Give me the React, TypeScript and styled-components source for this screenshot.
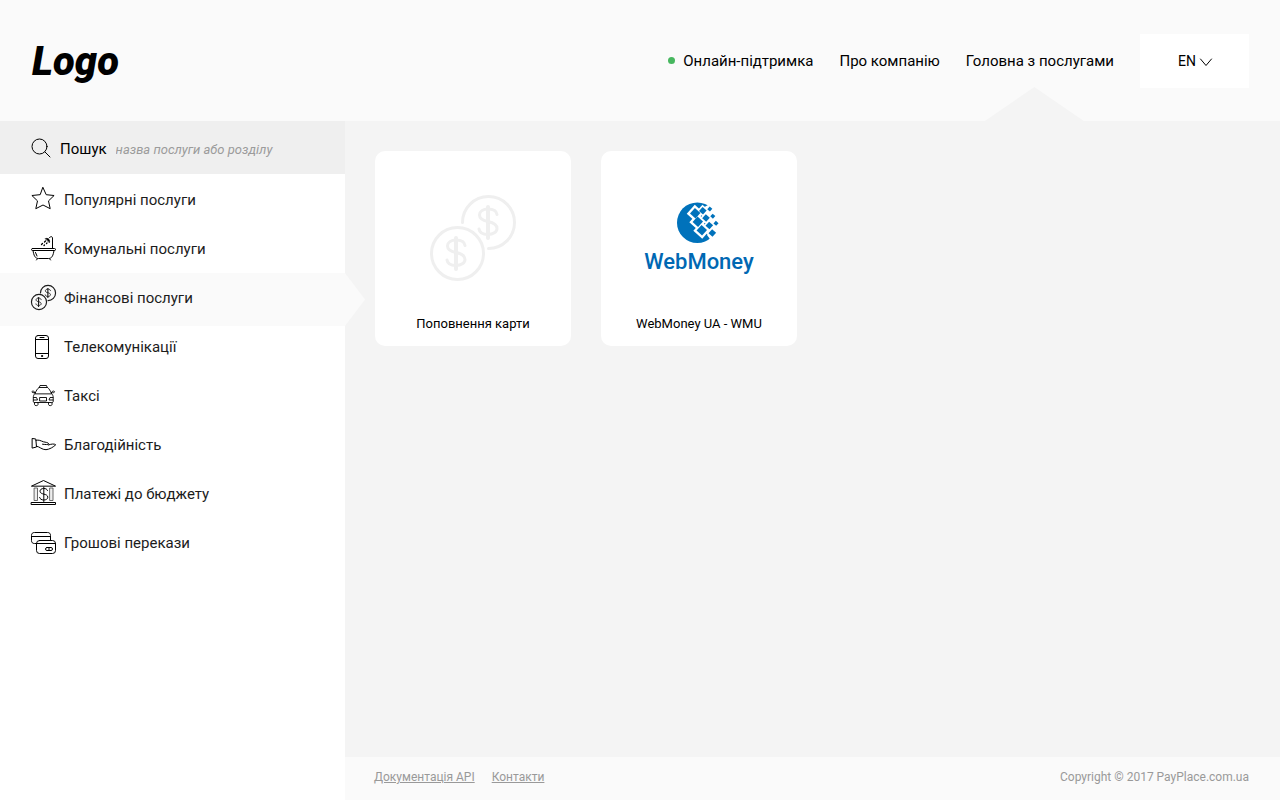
import React from "react";
import styled, { createGlobalStyle, css } from "styled-components";

const GlobalStyle = createGlobalStyle`
  *, *::before, *::after { box-sizing: border-box; }
  body {
    margin: 0;
    background: #f4f4f4;
    color: #000;
    font-family: Roboto, "Liberation Sans", sans-serif;
    font-size: 15px;
    line-height: 20px;
  }
  a { color: inherit; text-decoration: none; }
`;

const Page = styled.div`
  display: flex;
  flex-direction: column;
  min-height: 100vh;
`;

const Header = styled.header`
  display: flex;
  align-items: center;
  justify-content: space-between;
  height: 121px;
  padding: 0 31px 0 32px;
  background: #fafafa;
`;

const Logo = styled.a`
  padding-top: 2px;
  font-size: 40px;
  line-height: 48px;
  font-weight: 900;
  font-style: italic;
`;

const Nav = styled.nav`
  display: flex;
  align-items: center;
  align-self: stretch;
  gap: 26px;
`;

const NavLink = styled.a<{ $active?: boolean }>`
  position: relative;
  display: flex;
  align-items: center;
  align-self: stretch;
  gap: 8px;
  white-space: nowrap;

  ${({ $active }) =>
    $active &&
    css`
      &::after {
        content: "";
        position: absolute;
        left: 19px;
        bottom: 0;
        width: 99px;
        height: 34px;
        background: #f4f4f4;
        clip-path: polygon(50% 0, 100% 100%, 0 100%);
      }
    `}
`;

const OnlineDot = styled.span`
  width: 7px;
  height: 7px;
  border-radius: 50%;
  background: #47b75f;
`;

const Language = styled.label`
  position: relative;
  display: flex;
  width: 109px;
  height: 54px;
  background: #fff;

  svg {
    position: absolute;
    right: 37px;
    top: 24px;
    pointer-events: none;
  }
`;

const LanguageSelect = styled.select`
  appearance: none;
  flex: 1;
  padding: 0 38px;
  border: 0;
  background: transparent;
  color: #000;
  font: inherit;
  font-size: 14px;
  cursor: pointer;
`;

const Body = styled.div`
  display: flex;
  flex: 1;
`;

const Sidebar = styled.aside`
  flex: 0 0 345px;
  background: #fff;
`;

const Search = styled.label`
  display: flex;
  align-items: center;
  gap: 9px;
  height: 53px;
  padding: 0 31px;
  background: #efefef;
`;

const SearchTitle = styled.span`
  padding-top: 2px;
`;

const SearchInput = styled.input`
  flex: 1;
  min-width: 0;
  padding: 4px 0 0;
  border: 0;
  outline: 0;
  background: transparent;
  font: italic 13px/20px Roboto, "Liberation Sans", sans-serif;

  &::placeholder { color: #9b9b9b; opacity: 1; }
`;

const Menu = styled.ul`
  margin: 0;
  padding: 1px 0 0;
  list-style: none;
`;

const MenuLink = styled.a<{ $active?: boolean }>`
  position: relative;
  display: flex;
  align-items: center;
  gap: 8px;
  height: 49px;
  padding: 0 31px;
  color: #1c1c1c;

  ${({ $active }) =>
    $active &&
    css`
      height: 53px;
      margin-bottom: -4px;
      padding-bottom: 4px;
      background: #fafafa;

      &::after {
        content: "";
        position: absolute;
        left: 100%;
        top: 0;
        width: 20px;
        height: 100%;
        background: #fafafa;
        clip-path: polygon(0 0, 100% 50%, 0 100%);
      }
    `}
`;

const Glyph = styled.svg`
  flex: none;
  overflow: visible;
  fill: none;
  stroke: currentColor;
  stroke-linecap: round;
  stroke-linejoin: round;
`;

const Main = styled.main`
  display: flex;
  flex: 1;
  flex-direction: column;
  min-width: 0;
`;

const Cards = styled.div`
  display: flex;
  flex: 1;
  flex-wrap: wrap;
  align-content: flex-start;
  gap: 30px;
  padding: 30px;
`;

const Card = styled.a`
  display: flex;
  flex-direction: column;
  align-items: center;
  width: 196px;
  height: 195px;
  padding: 10px 10px 12px;
  border-radius: 10px;
  background: #fff;
  font-size: 13px;
  text-align: center;
`;

const CardPicture = styled.span`
  display: flex;
  flex: 1;
  flex-direction: column;
  align-items: center;
  justify-content: center;
  color: #efefef;
`;

const WebMoneyName = styled.span`
  color: #0068b3;
  font-size: 22px;
  font-weight: 500;
  line-height: 24px;
  padding-top: 6px;
`;

const Footer = styled.footer`
  display: flex;
  align-items: center;
  justify-content: space-between;
  height: 43px;
  padding: 0 31px 3px 29px;
  background: #fafafa;
  color: #999;
  font-size: 12px;
`;

const FooterLinks = styled.div`
  display: flex;
  gap: 17px;

  a { text-decoration: underline; }
`;

const Dollar = () => (
  <>
    <path d="M26 43V74" />
    <path d="M35 50.5C34.5 47 31 45 26 45C21 45 17.500 47.500 17.500 51C17.500 55 21 56.500 26 57.500C31 58.500 35 60.500 35 64.500C35 68 31 70.500 26 70.500C21 70.500 17.500 68.500 17 65" strokeWidth="3" />
  </>
);

const Coins = ({ size, weight }: { size: number; weight: number }) => (
  <Glyph width={size} height={size} viewBox="0 0 86 86" strokeWidth={weight} aria-hidden>
    <circle cx="27.5" cy="58.5" r="26" />
    <path d="M32.500 27.500A26 26 0 1 1 58.500 53.500" />
    <g strokeWidth="4">
      <Dollar />
      <g transform="translate(32 -31)">
        <Dollar />
      </g>
    </g>
  </Glyph>
);

const Icon = ({ children }: { children: React.ReactNode }) => (
  <Glyph width="25" height="25" viewBox="0 0 25 25" color="#000" aria-hidden>
    {children}
  </Glyph>
);

const StarIcon = () => (
  <Icon>
    <path d="M12 .6L15.200 7.700L23.100 8.500L17.500 13.900L19.200 21.700L12 18L4.800 21.700L6.500 13.900L.9 8.500L8.800 7.700Z" />
  </Icon>
);

const BathIcon = () => (
  <Icon>
    <rect x=".5" y="12.500" width="24" height="2" rx="1" />
    <path d="M2 14.500C2.800 19.500 4 22.500 7.500 22.500H17.500C21 22.500 22.200 19.500 23 14.500M6.500 22.700L5.500 24M18.500 22.700L19.500 24M4.500 16.500L6 20" />
    <path d="M21.500 12.500V2C21.500 .2 19.500 .2 18 2" />
    <path d="M14.500 2.500C17 1.500 19.500 4 18.500 6.500Z" fill="currentColor" strokeWidth=".6" />
    <path d="M14.500 5L13.500 6M11.500 7.500L10.500 8.500M16 7L15.500 7.500M13.500 9L13 9.500" strokeWidth="1.300" />
  </Icon>
);

const PhoneIcon = () => (
  <Icon>
    <rect x="4.500" y="1.500" width="13" height="23" rx="2.500" />
    <path d="M4.500 5.500H17.500M4.500 19.500H17.500M9 3.500H13" />
    <circle cx="11" cy="22" r=".6" fill="currentColor" />
  </Icon>
);

const TaxiIcon = () => (
  <Icon>
    <g strokeWidth=".9">
      <path d="M8.300 4.500L9 2.500H15.500L16.200 4.500M4 10.500C5 8 6.500 5.500 8 4.500H16.500C18 5.500 19.500 8 20.500 10.500Z" />
      <path d="M4 10.500C2.800 11.500 2.300 13 2.300 14.500V18.500C2.300 19.500 3 19.500 4 19.500H20.500C21.500 19.500 22.200 19.500 22.200 18.500V14.500C22.200 13 21.700 11.500 20.500 10.500" />
      <path d="M4 9.500C3.800 8 1 7.500 1 8.800C1 9.800 2.500 10 4 9.500ZM20.500 9.500C20.700 8 23.500 7.500 23.500 8.800C23.500 9.800 22 10 20.500 9.500Z" />
      <rect x="9" y="14.500" width="6.500" height="3.500" />
      <path d="M2.500 14.500H5.500L6.500 17H2.500M22 14.500H19L18 17H22M3.500 19.500V21.500C3.500 23 7 23 7 21.500V19.500M17.500 19.500V21.500C17.500 23 21 23 21 21.500V19.500" />
    </g>
  </Icon>
);

const HandIcon = () => (
  <Icon>
    <path d="M1.500 6.500L4.800 7L5.500 15L1.500 16ZM5 8.300C8 7.500 9.500 8.800 12.500 9.800C14.500 10.300 17 10.500 17.600 11.500C17.800 12.700 15.500 12.800 11.500 12.200M5.500 14.200C8.500 14.500 11 17.800 15 17.700C18.500 17.400 22.500 15 24.700 12.800C23.500 11.500 20 12 17.300 13" />
  </Icon>
);

const BankIcon = () => (
  <Icon>
    <path d="M.8 5L12.500 -.5L24.200 5Z" />
    <rect x=".5" y="21.500" width="24" height="2" />
    <path d="M3.500 7H6.500V19.500H3.500ZM19 7H22V19.500H19Z" stroke="#444" strokeWidth=".8" fill="#eee" />
    <path d="M12.800 6V20.500M16.500 9.500C16 8 14.800 7.500 12.800 7.500C10.500 7.500 9 8.500 9 10.200C9 14 16.800 12.200 16.800 16.200C16.800 18 15 19 12.800 19C10.500 19 9 18 8.600 16.500" />
  </Icon>
);

const TransferIcon = () => (
  <Icon>
    <path d="M5.500 13.500H3.500C1.500 13.500 .5 12.500 .5 10.500V5.500C.5 3.500 1.500 2.500 3.500 2.500H16.500C18.500 2.500 19.500 3.500 19.500 5.500V10.500M.5 6.500H19.500" />
    <rect x="5.500" y="10.500" width="19" height="13" rx="3" fill="#fff" />
    <path d="M5.500 13.500H24.500" />
    <rect x="14.500" y="17.500" width="7" height="3" rx="1.500" />
    <path d="M18 17.500V20.500" />
  </Icon>
);

const bigTiles = [[18.2, 11.3], [20.8, 19.7], [24.8, 28.2]];
const mediumTiles = [[25.8, 8.7], [29, 16], [32.3, 23.5], [35.3, 31]];
const smallTiles = [[32.8, 7], [35.8, 14.2], [39, 21.3]];

const Tiles = ({ at, side, fill }: { at: number[][]; side: number; fill: string }) => (
  <>
    {at.map(([x, y]) => (
      <rect
        key={`${x}-${y}`}
        x={x - side / 2}
        y={y - side / 2}
        width={side}
        height={side}
        fill={fill}
        transform={`rotate(42 ${x} ${y})`}
      />
    ))}
  </>
);

const WebMoneyMark = () => (
  <svg width="44" height="42" viewBox="0 0 44 42" aria-hidden>
    <circle cx="20.300" cy="20.700" r="20.300" fill="#0072bb" />
    <path d="M31 3L24 7L28 16L31 24L32 30L30 33L33 37L42 36V0H34Z" fill="#fff" />
    <Tiles at={bigTiles} side={12} fill="#fff" />
    <Tiles at={mediumTiles} side={8.600} fill="#fff" />
    <Tiles at={bigTiles} side={7.400} fill="#0072bb" />
    <Tiles at={mediumTiles} side={5.400} fill="#0072bb" />
    <Tiles at={smallTiles} side={3.600} fill="#0072bb" />
  </svg>
);

const menu = [
  { title: "Популярні послуги", icon: <StarIcon /> },
  { title: "Комунальні послуги", icon: <BathIcon /> },
  { title: "Фінансові послуги", icon: <Coins size={25} weight={4} />, active: true },
  { title: "Телекомунікації", icon: <PhoneIcon /> },
  { title: "Таксі", icon: <TaxiIcon /> },
  { title: "Благодійність", icon: <HandIcon /> },
  { title: "Платежі до бюджету", icon: <BankIcon /> },
  { title: "Грошові перекази", icon: <TransferIcon /> },
];

export default function App() {
  return (
    <Page>
      <GlobalStyle />
      <Header>
        <Logo href="#">Logo</Logo>
        <Nav>
          <NavLink href="#">
            <OnlineDot />
            Онлайн-підтримка
          </NavLink>
          <NavLink href="#">Про компанію</NavLink>
          <NavLink href="#" $active>
            Головна з послугами
          </NavLink>
          <Language>
            <LanguageSelect aria-label="Мова" defaultValue="EN">
              <option>EN</option>
              <option>UA</option>
            </LanguageSelect>
            <Glyph width="12" height="8" viewBox="0 0 12 8" aria-hidden>
              <path d="M.5 1L6 7.500L11.500 1" />
            </Glyph>
          </Language>
        </Nav>
      </Header>
      <Body>
        <Sidebar>
          <Search>
            <Glyph width="20" height="20" viewBox="0 0 20 20" aria-hidden>
              <circle cx="8.500" cy="8.500" r="7.500" />
              <path d="M14 14L19 19" />
            </Glyph>
            <SearchTitle>Пошук</SearchTitle>
            <SearchInput type="text" placeholder="назва послуги або розділу" />
          </Search>
          <Menu>
            {menu.map(({ title, icon, active }) => (
              <li key={title}>
                <MenuLink href="#" $active={active}>
                  {icon}
                  {title}
                </MenuLink>
              </li>
            ))}
          </Menu>
        </Sidebar>
        <Main>
          <Cards>
            <Card href="#">
              <CardPicture>
                <Coins size={86} weight={3} />
              </CardPicture>
              Поповнення карти
            </Card>
            <Card href="#">
              <CardPicture>
                <WebMoneyMark />
                <WebMoneyName>WebMoney</WebMoneyName>
              </CardPicture>
              WebMoney UA - WMU
            </Card>
          </Cards>
          <Footer>
            <FooterLinks>
              <a href="#">Документація API</a>
              <a href="#">Контакти</a>
            </FooterLinks>
            <span>Copyright © 2017 PayPlace.com.ua</span>
          </Footer>
        </Main>
      </Body>
    </Page>
  );
}
